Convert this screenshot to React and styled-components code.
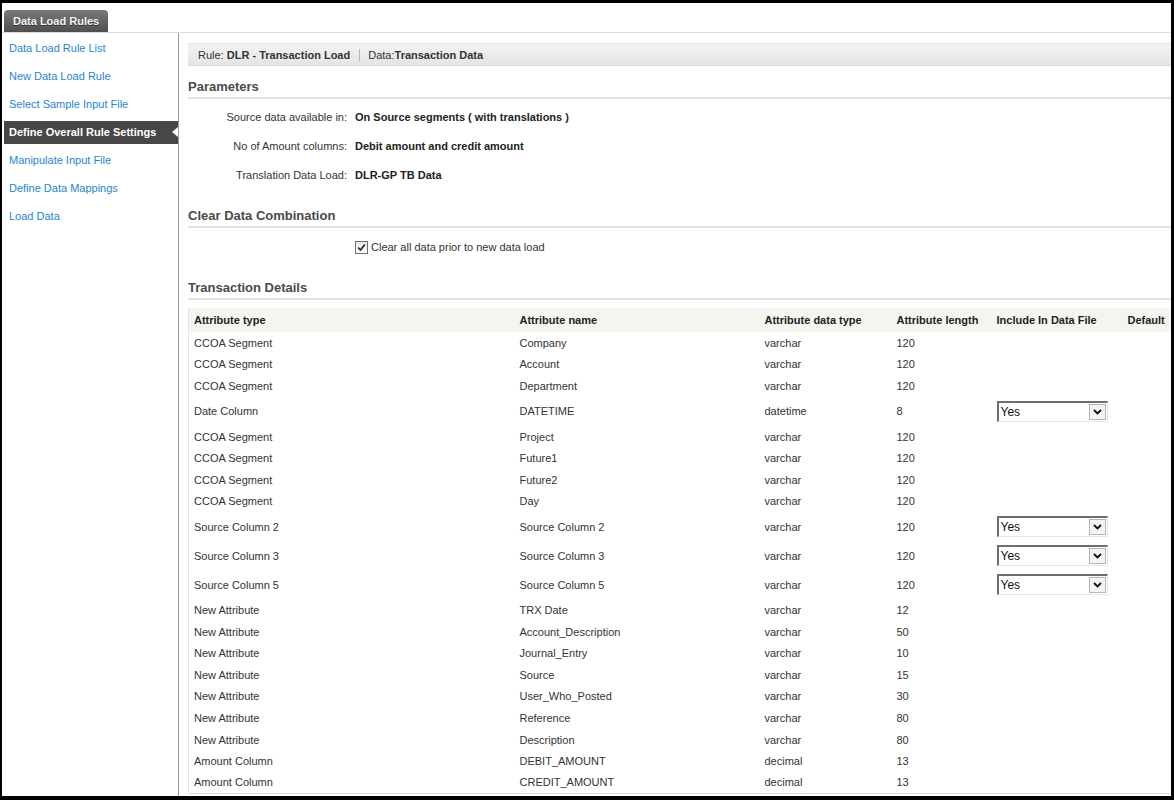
import React from 'react'
import styled, { createGlobalStyle } from 'styled-components'

const GlobalStyle = createGlobalStyle`
  html, body {
    margin: 0;
    padding: 0;
    background: #000;
  }
  body {
    font-family: "Liberation Sans", Arial, sans-serif;
    font-size: 11px;
    color: #333;
  }
`

const Frame = styled.div`
  margin: 3px 3px 0 2px;
  height: 793px;
  background: #fff;
  overflow: hidden;
  display: flex;
  flex-direction: column;
`

const TabStrip = styled.div`
  height: 30px;
  box-sizing: border-box;
  padding: 8px 0 0 2px;
  border-bottom: 1px solid #dcdcdc;
  display: flex;
  align-items: flex-end;
`

const Tab = styled.div`
  height: 22px;
  padding: 0 9px;
  box-sizing: border-box;
  display: flex;
  align-items: center;
  background: linear-gradient(#7a7a7a, #4e4e4e);
  border-radius: 4px 4px 0 0;
  color: #f4f4f4;
  font-weight: bold;
  font-size: 11px;
  text-shadow: 0 1px 0 #333;
`

const Body = styled.div`
  flex: 1;
  display: flex;
  min-height: 0;
`

const Sidebar = styled.nav`
  width: 177px;
  flex-shrink: 0;
  border-right: 1px solid #9a9a9a;
  padding: 4px 0 0 2px;
  box-sizing: border-box;
  display: flex;
  flex-direction: column;
  gap: 5px;
`

const NavItem = styled.div`
  position: relative;
  height: 23px;
  line-height: 23px;
  padding-left: 5px;
  font-size: 11px;
  color: ${(p) => (p.$active ? '#fff' : '#2485d8')};
  font-weight: ${(p) => (p.$active ? 'bold' : 'normal')};
  background: ${(p) => (p.$active ? '#474747' : 'transparent')};

  ${(p) =>
    p.$active &&
    `
    &::after {
      content: '';
      position: absolute;
      right: 0;
      top: 6px;
      border-style: solid;
      border-width: 5.5px 6px 5.5px 0;
      border-color: transparent #fff transparent transparent;
    }
  `}
`

const Main = styled.main`
  flex: 1;
  min-width: 0;
  overflow: hidden;
  padding: 10px 0 0 9px;
`

const Content = styled.div`
  width: 1010px;
`

const RuleBar = styled.div`
  height: 23px;
  box-sizing: border-box;
  display: flex;
  align-items: center;
  padding-left: 10px;
  background: linear-gradient(#f3f3f3, #e4e4e4);
  border-top: 1px solid #e8e8e8;
  border-bottom: 1px solid #d8d8d8;
  color: #333;
`

const RulePart = styled.span`
  padding-right: 9px;
  & + & {
    padding-left: 8px;
    border-left: 1px solid #b8b8b8;
  }
  b {
    font-weight: bold;
  }
`

const SectionHeader = styled.h2`
  margin: ${(p) => p.$top}px 0 0 0;
  height: 20px;
  line-height: 20px;
  font-size: 13px;
  font-weight: bold;
  color: #4a4a4a;
  border-bottom: 2px solid #e2e2e2;
`

const ParamList = styled.div`
  padding-top: 3px;
`

const ParamRow = styled.div`
  display: grid;
  grid-template-columns: 159px 1fr;
  column-gap: 8px;
  height: 29px;
  align-items: center;
`

const ParamLabel = styled.span`
  text-align: right;
  color: #333;
`

const ParamValue = styled.span`
  font-weight: bold;
  color: #222;
`

const CheckRow = styled.label`
  display: flex;
  align-items: center;
  height: 20px;
  margin: 9px 0 0 167px;
  gap: 3px;
  color: #333;
`

const CheckBox = styled.span`
  width: 11px;
  height: 11px;
  border: 1px solid #707070;
  background: linear-gradient(#e8e8e8, #fff);
  display: flex;
  align-items: center;
  justify-content: center;
`

const Table = styled.table`
  margin-top: 8px;
  border-collapse: collapse;
  table-layout: fixed;
  width: 1010px;
  border-left: 1px solid #e6e6e6;
  border-bottom: 1px solid #e0e0e0;
`

const HeadCell = styled.th`
  height: 24px;
  padding: 0 0 0 5px;
  text-align: left;
  font-weight: bold;
  font-size: 11px;
  color: #222;
  background: #f5f5f0;
  white-space: nowrap;
`

const Row = styled.tr`
  height: ${(p) => (p.$tall ? 29 : 21.6)}px;
`

const Cell = styled.td`
  padding: 0 0 0 5px;
  font-size: 11px;
  color: #333;
  white-space: nowrap;
`

const Select = styled.div`
  width: 111px;
  height: 21px;
  box-sizing: border-box;
  display: flex;
  align-items: stretch;
  border-top: 2px solid #6e6e6e;
  border-left: 2px solid #6e6e6e;
  border-right: 1px solid #e6e6e6;
  border-bottom: 1px solid #e6e6e6;
  background: #fff;
`

const SelectText = styled.span`
  flex: 1;
  font-size: 12px;
  color: #111;
  line-height: 18px;
  padding-left: 2px;
`

const SelectButton = styled.span`
  width: 17px;
  margin: 1px;
  box-sizing: border-box;
  border: 1px solid #b5b5b5;
  background: #f4f4f4;
  display: flex;
  align-items: center;
  justify-content: center;
`

const Chevron = () => (
  <svg width="9" height="6" viewBox="0 0 9 6">
    <path d="M1 1 L4.5 4.5 L8 1" fill="none" stroke="#111" strokeWidth="1.8" />
  </svg>
)

const YesSelect = () => (
  <Select>
    <SelectText>Yes</SelectText>
    <SelectButton>
      <Chevron />
    </SelectButton>
  </Select>
)

const navItems = [
  'Data Load Rule List',
  'New Data Load Rule',
  'Select Sample Input File',
  'Define Overall Rule Settings',
  'Manipulate Input File',
  'Define Data Mappings',
  'Load Data',
]

const params = [
  ['Source data available in:', 'On Source segments ( with translations )'],
  ['No of Amount columns:', 'Debit amount and credit amount'],
  ['Translation Data Load:', 'DLR-GP TB Data'],
]

const columns = [
  ['Attribute type', 326],
  ['Attribute name', 245],
  ['Attribute data type', 132],
  ['Attribute length', 100],
  ['Include In Data File', 131],
  ['Default', 76],
]

const rows = [
  ['CCOA Segment', 'Company', 'varchar', '120'],
  ['CCOA Segment', 'Account', 'varchar', '120'],
  ['CCOA Segment', 'Department', 'varchar', '120'],
  ['Date Column', 'DATETIME', 'datetime', '8', true],
  ['CCOA Segment', 'Project', 'varchar', '120'],
  ['CCOA Segment', 'Future1', 'varchar', '120'],
  ['CCOA Segment', 'Future2', 'varchar', '120'],
  ['CCOA Segment', 'Day', 'varchar', '120'],
  ['Source Column 2', 'Source Column 2', 'varchar', '120', true],
  ['Source Column 3', 'Source Column 3', 'varchar', '120', true],
  ['Source Column 5', 'Source Column 5', 'varchar', '120', true],
  ['New Attribute', 'TRX Date', 'varchar', '12'],
  ['New Attribute', 'Account_Description', 'varchar', '50'],
  ['New Attribute', 'Journal_Entry', 'varchar', '10'],
  ['New Attribute', 'Source', 'varchar', '15'],
  ['New Attribute', 'User_Who_Posted', 'varchar', '30'],
  ['New Attribute', 'Reference', 'varchar', '80'],
  ['New Attribute', 'Description', 'varchar', '80'],
  ['Amount Column', 'DEBIT_AMOUNT', 'decimal', '13'],
  ['Amount Column', 'CREDIT_AMOUNT', 'decimal', '13'],
]

const App = () => {
  return (
    <>
      <GlobalStyle />
      <Frame>
        <TabStrip>
          <Tab>Data Load Rules</Tab>
        </TabStrip>
        <Body>
          <Sidebar>
            {navItems.map((item) => (
              <NavItem key={item} $active={item === 'Define Overall Rule Settings'}>
                {item}
              </NavItem>
            ))}
          </Sidebar>
          <Main>
            <Content>
              <RuleBar>
                <RulePart>
                  Rule: <b>DLR - Transaction Load</b>
                </RulePart>
                <RulePart>
                  Data:<b>Transaction Data</b>
                </RulePart>
              </RuleBar>

              <SectionHeader $top={11}>Parameters</SectionHeader>
              <ParamList>
                {params.map(([label, value]) => (
                  <ParamRow key={label}>
                    <ParamLabel>{label}</ParamLabel>
                    <ParamValue>{value}</ParamValue>
                  </ParamRow>
                ))}
              </ParamList>

              <SectionHeader $top={17}>Clear Data Combination</SectionHeader>
              <CheckRow>
                <CheckBox>
                  <svg width="9" height="9" viewBox="0 0 9 9">
                    <path d="M1.2 4.6 L3.5 7 L7.8 1.6" fill="none" stroke="#222" strokeWidth="1.6" />
                  </svg>
                </CheckBox>
                Clear all data prior to new data load
              </CheckRow>

              <SectionHeader $top={21}>Transaction Details</SectionHeader>
              <Table>
                <colgroup>
                  {columns.map(([name, w]) => (
                    <col key={name} style={{ width: w }} />
                  ))}
                </colgroup>
                <thead>
                  <tr>
                    {columns.map(([name]) => (
                      <HeadCell key={name}>{name}</HeadCell>
                    ))}
                  </tr>
                </thead>
                <tbody>
                  {rows.map(([type, name, dtype, len, include], i) => (
                    <Row key={i} $tall={include}>
                      <Cell>{type}</Cell>
                      <Cell>{name}</Cell>
                      <Cell>{dtype}</Cell>
                      <Cell>{len}</Cell>
                      <Cell>{include && <YesSelect />}</Cell>
                      <Cell />
                    </Row>
                  ))}
                </tbody>
              </Table>
            </Content>
          </Main>
        </Body>
      </Frame>
    </>
  )
}

export default App
